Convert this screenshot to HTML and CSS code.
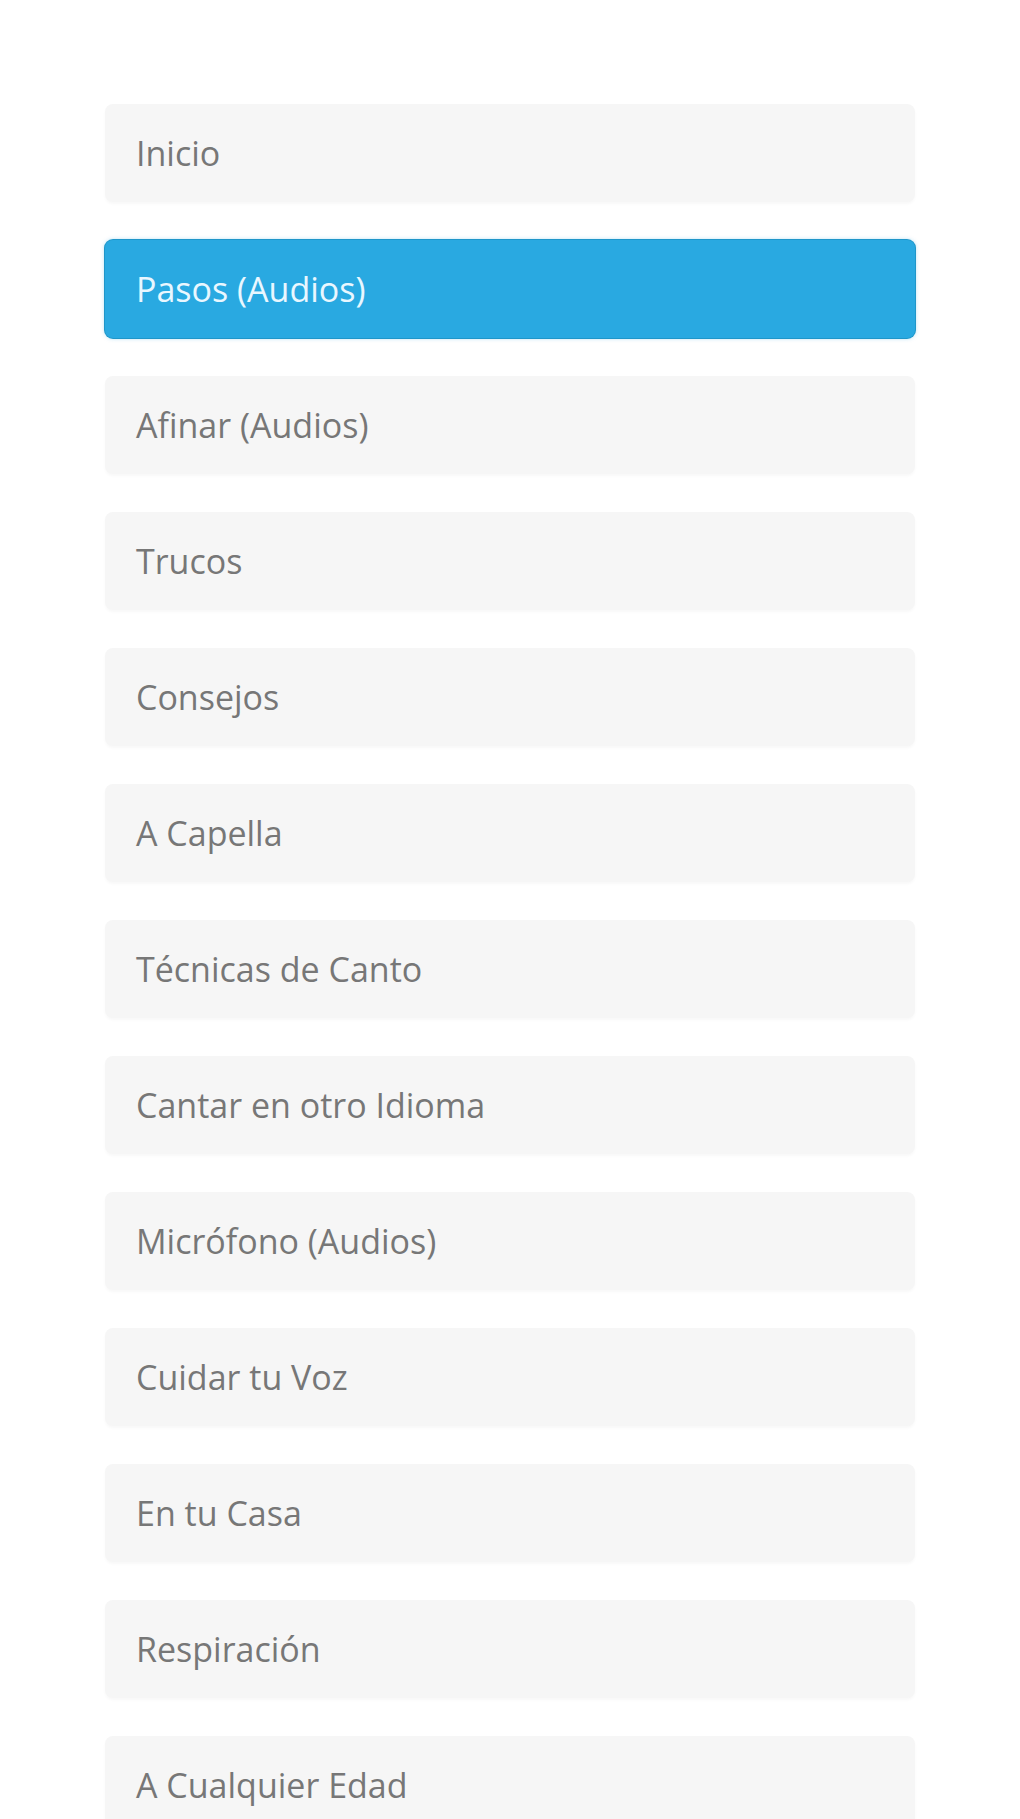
FILE: index.html
```html
<!DOCTYPE html>
<html lang="es">
<head>
    <meta charset="UTF-8">
    <meta name="viewport" content="width=device-width, initial-scale=1.0">
    <title>Aprende a Cantar</title>
    <link rel="stylesheet" href="styles.css">
</head>
<body>
    <div class="container">
        <ul class="menu">
            <li><a href="#" class="menu-item">Inicio</a></li>
            <li><a href="#" class="menu-item active">Pasos (Audios)</a></li>
            <li><a href="#" class="menu-item">Afinar (Audios)</a></li>
            <li><a href="#" class="menu-item">Trucos</a></li>
            <li><a href="#" class="menu-item">Consejos</a></li>
            <li><a href="#" class="menu-item">A Capella</a></li>
            <li><a href="#" class="menu-item">Técnicas de Canto</a></li>
            <li><a href="#" class="menu-item">Cantar en otro Idioma</a></li>
            <li><a href="#" class="menu-item">Micrófono (Audios)</a></li>
            <li><a href="#" class="menu-item">Cuidar tu Voz</a></li>
            <li><a href="#" class="menu-item">En tu Casa</a></li>
            <li><a href="#" class="menu-item">Respiración</a></li>
            <li><a href="#" class="menu-item">A Cualquier Edad</a></li>
        </ul>
    </div>
</body>
</html>
```

FILE: styles.css
```css
body {
    font-family: "Open Sans", "Noto Sans", sans-serif;
    margin: 0;
    padding: 0;
    background-color: #fff;
}
.container {
    width: 810px;
    margin: 0 auto;
    padding-top: 104px;
}
.menu {
    list-style: none;
    margin: 0;
    padding: 0;
    display: flex;
    flex-direction: column;
    gap: 38px;
}
.menu-item {
    display: flex;
    align-items: center;
    height: 98px;
    padding-left: 31px;
    background-color: #f6f6f6;
    border-radius: 8px;
    box-shadow: 0 2px 3px rgba(0, 0, 0, 0.03);
    color: #777;
    font-size: 34px;
    text-decoration: none;
}
.menu-item.active {
    background-color: #29a9e1;
    color: #e9f7ff;
    box-shadow: 0 0 0 1px #1f96c9, 0 0 4px rgba(41, 169, 225, 0.5);
}
```
